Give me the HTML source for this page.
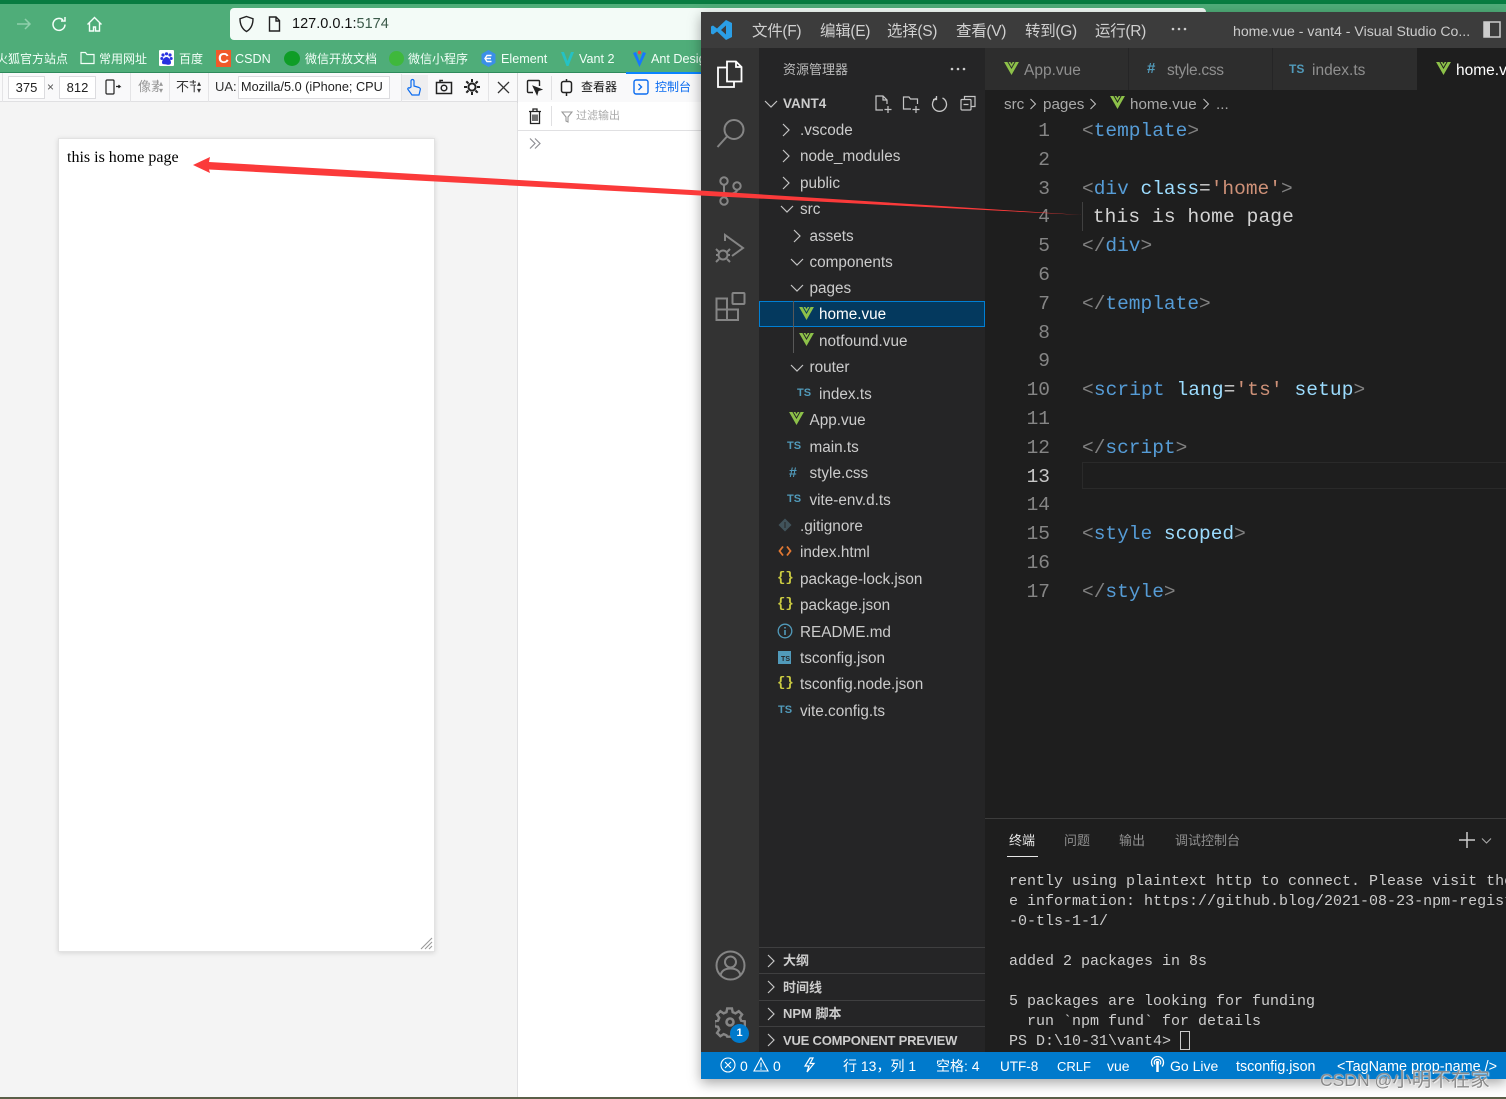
<!DOCTYPE html>
<html><head><meta charset="utf-8"><style>
html,body{margin:0;padding:0;background:#fff}
#p{position:relative;width:1506px;height:1099px;overflow:hidden;background:#fff;font-family:"Liberation Sans","Noto Sans CJK SC",sans-serif}
#p div,#p span.a,#p svg.a{position:absolute}
.t{white-space:nowrap}
.r{position:absolute;white-space:nowrap;color:#cccccc;font-size:15.300px;line-height:26px;height:26px;margin-top:1px}
.bm{position:absolute;top:50px;height:18px;line-height:18px;font-size:12px;color:#f2fff8;white-space:nowrap}
.bl{font-size:12.600px}
.m{position:absolute;top:20px;line-height:24px;font-size:15.500px;letter-spacing:-.3px;color:#d0d0d0;white-space:nowrap}
.ln{position:absolute;left:1000px;width:50px;text-align:right;font:19.5px/28px "Liberation Mono",monospace;color:#858585;margin-top:1px}
.c{position:absolute;left:1082px;font:19.5px/28px "Liberation Mono",monospace;color:#d4d4d4;white-space:pre;margin-top:1px}
.g{color:#808080}.b{color:#569cd6}.l{color:#9cdcfe}.s{color:#ce9178}
.tm{position:absolute;left:1009px;font:15px/20px "Liberation Mono",monospace;color:#cccccc;white-space:pre;margin-top:1px}
.sb{position:absolute;top:1057px;line-height:18px;font-size:14px;color:#fff;white-space:nowrap}
.sh{position:absolute;left:759px;width:226px;height:1px;background:#3f3f40}
.st{position:absolute;left:783px;font-size:13px;font-weight:bold;color:#cccccc;line-height:20px;white-space:nowrap;margin-top:1px}
.ts{position:absolute;font:bold 11px/14px "Liberation Sans",sans-serif;color:#519aba}
.j{position:absolute;font:bold 14px/16px "Liberation Mono",monospace;color:#cbcb41;letter-spacing:0}
</style></head><body><div id="p">
<svg width="0" height="0" style="position:absolute"><defs>
<symbol id="v" viewBox="0 0 16 14"><path d="M0 0h3.6L8 7.6 12.400 0H16L8 14z" fill="#8dc149"/><path d="M4.800 0h2L8 2.200 9.200 0h2L8 5.500z" fill="#8dc149"/></symbol>
<symbol id="cr" viewBox="0 0 12 14"><path d="M3 1l6 6-6 6" fill="none" stroke="#c5c5c5" stroke-width="1.200"/></symbol>
<symbol id="cd" viewBox="0 0 14 12"><path d="M1 3l6 6 6-6" fill="none" stroke="#c5c5c5" stroke-width="1.200"/></symbol>
</defs></svg>

<!-- browser chrome -->
<div style="left:0;top:0;width:1506px;height:4px;background:#087c41"></div>
<div style="left:0;top:4px;width:1506px;height:68px;background:#4fad79"></div>
<div style="left:230px;top:8px;width:976px;height:32px;background:#f3fbf7;border-radius:4px"></div>
<svg class="a" style="left:15px;top:15px" width="18" height="18" fill="none" stroke="#8fd0ac" stroke-width="1.500"><path d="M2 9h13M10 4l5 5-5 5"/></svg>
<svg class="a" style="left:51px;top:16px" width="17" height="17" fill="none" stroke="#f4fff9" stroke-width="1.500"><path d="M14 8.500a6 6 0 1 1-2-4.600M14 1v4h-4"/></svg>
<svg class="a" style="left:86px;top:16px" width="17" height="17" fill="none" stroke="#f4fff9" stroke-width="1.400"><path d="M1.500 8.500L8.500 1.500l7 7M3.500 7v8h4v-4h2v4h4V7"/></svg>
<svg class="a" style="left:238px;top:15px" width="17" height="18" fill="none" stroke="#222" stroke-width="1.400"><path d="M8.500 1.500l6.500 2.200c0 6-1.800 10-6.500 12.800C3.800 13.700 2 9.700 2 3.700z"/></svg>
<svg class="a" style="left:268px;top:16px" width="13" height="16" fill="none" stroke="#222" stroke-width="1.400"><path d="M1.500 1h6.500l3.500 3.500V15h-10zM8 1v4h3.500"/></svg>
<div class="t" style="left:292px;top:14px;font-size:14.500px;line-height:20px;color:#152"><span style="color:#111">127.0.0.1:</span><span style="color:#3c5a4a">5174</span></div>

<div class="bm" style="left:-4px">火狐官方站点</div>
<svg class="a" style="left:80px;top:51px" width="15" height="14" fill="none" stroke="#f2fff8" stroke-width="1.200"><path d="M1 3V12.500H14V3.500H7L5.500 1.500H1z"/></svg>
<div class="bm" style="left:99px">常用网址</div>
<div style="left:159px;top:50px;width:15px;height:16px;background:#fff;border-radius:1px"></div>
<svg class="a" style="left:159px;top:51px" width="15" height="15" fill="#2932e1"><circle cx="4" cy="4" r="1.600"/><circle cx="7.500" cy="2.800" r="1.600"/><circle cx="11" cy="4" r="1.600"/><circle cx="2.800" cy="7.500" r="1.500"/><circle cx="12.200" cy="7.500" r="1.500"/><path d="M7.500 6c2 0 4.500 3 4.500 5.500S9.500 14 7.500 13.500 3 14 3 11.500 5.500 6 7.500 6z"/></svg>
<div class="bm" style="left:179px">百度</div>
<div style="left:216px;top:50px;width:15px;height:17px;background:#f1592a;color:#fff;font:bold 15px/17px 'Liberation Sans';text-align:center">C</div>
<div class="bm bl" style="left:235px">CSDN</div>
<div style="left:284px;top:51px;width:16px;height:15px;border-radius:50%;background:#0f9d27"></div>
<div class="bm" style="left:305px">微信开放文档</div>
<div style="left:389px;top:51px;width:15px;height:15px;border-radius:50%;background:#3fb83c"></div>
<div class="bm" style="left:408px">微信小程序</div>
<svg class="a" style="left:481px;top:50px" width="15" height="17"><path d="M7.500 0L14.500 4v9L7.500 17 .5 13V4z" fill="#3b8fe8"/><path d="M10.500 5.500L6 5.500 4 8.500 6 11.500 10.500 11.500M5 8.500h5" fill="none" stroke="#fff" stroke-width="1.400"/></svg>
<div class="bm bl" style="left:501px">Element</div>
<svg class="a" style="left:560px;top:51px" width="15" height="16"><path d="M1 1l3 0 3.500 9L11 1h3L8.500 15H6.500z" fill="#25c2c4"/></svg>
<div class="bm bl" style="left:579px">Vant 2</div>
<svg class="a" style="left:632px;top:50px" width="15" height="17"><path d="M1 3l3-1 3.500 9L11 2l3 1-6.500 14z" fill="#1677ff"/><circle cx="7.500" cy="2.500" r="1.700" fill="#f5483b"/></svg>
<div class="bm bl" style="left:651px">Ant Desig</div>

<!-- responsive toolbar -->
<div style="left:0;top:72px;width:701px;height:1px;background:#2e8a5c"></div>
<div style="left:0;top:73px;width:701px;height:29px;background:#f9f9fa"></div>
<div style="left:0;top:101px;width:518px;height:1px;background:#e0e0e2"></div>
<div style="left:518px;top:102px;width:183px;height:995px;background:#fff"></div>
<div style="left:517px;top:73px;width:1px;height:1024px;background:#e0e0e2"></div>
<div style="left:626px;top:72px;width:75px;height:2px;background:#0a84ff"></div>
<div style="left:2px;top:73px;width:1px;height:29px;background:#e4e4e6"></div>
<div style="left:8px;top:76px;width:35px;height:21px;background:#fff;border:1px solid #dcdcdf;text-align:center;font-size:13px;line-height:21px;color:#222">375</div>
<div class="t" style="left:47px;top:78px;font-size:12px;line-height:18px;color:#555">×</div>
<div style="left:59px;top:76px;width:35px;height:21px;background:#fff;border:1px solid #dcdcdf;text-align:center;font-size:13px;line-height:21px;color:#222">812</div>
<svg class="a" style="left:105px;top:79px" width="17" height="16" fill="none" stroke="#222" stroke-width="1.200"><rect x="1" y="1" width="8" height="14" rx="1"/><path d="M11 7.500h4l-1.500-1.500M15 7.500L13.500 9"/></svg>
<div style="left:130px;top:73px;width:1px;height:29px;background:#e4e4e6"></div>
<div class="t" style="left:138px;top:79px;width:21px;overflow:hidden;font-size:13px;line-height:16px;color:#999">像素</div>
<div class="t" style="left:159px;top:80px;font-size:8px;line-height:7px;color:#999">▴<br>▾</div>
<div style="left:169px;top:73px;width:1px;height:29px;background:#e4e4e6"></div>
<div class="t" style="left:176px;top:79px;width:20px;overflow:hidden;font-size:13px;line-height:16px;color:#333">不节</div>
<div class="t" style="left:197px;top:80px;font-size:8px;line-height:7px;color:#333">▴<br>▾</div>
<div style="left:208px;top:73px;width:1px;height:29px;background:#e4e4e6"></div>
<div class="t" style="left:215px;top:79px;font-size:13px;line-height:16px;color:#333">UA:</div>
<div class="t" style="left:238px;top:76px;width:148px;height:21px;overflow:hidden;background:#fff;border:1px solid #dcdcdf;font-size:12.700px;line-height:21px;color:#222;padding-left:2px;box-sizing:content-box">Mozilla/5.0 (iPhone; CPU</div>
<div style="left:401px;top:74px;width:1px;height:28px;background:#e4e4e6"></div>
<div style="left:402px;top:75px;width:26px;height:25px;background:#eeeef0"></div>
<svg class="a" style="left:405px;top:78px" width="18" height="19" fill="none" stroke="#0b6cf0" stroke-width="1.200"><path d="M6 9V3a1.500 1.500 0 0 1 3 0v5l5 1.500c1 .4 1.500 1 1.300 2L14 17H7L3 11.500c-.7-1 .6-2.300 1.600-1.500z"/></svg>
<svg class="a" style="left:435px;top:79px" width="18" height="16" fill="none" stroke="#222" stroke-width="1.500"><path d="M1.500 3.500h15v11h-15zM5 3V1.500h3"/><circle cx="9" cy="9" r="2.800"/></svg>
<svg class="a" style="left:463px;top:78px" width="18" height="18" fill="none" stroke="#222"><circle cx="9" cy="9" r="3.600" stroke-width="2"/><path d="M9 1v3M9 14v3M1 9h3M14 9h3M3.300 3.300l2.200 2.200M12.500 12.500l2.200 2.200M3.300 14.700l2.200-2.200M12.500 5.500l2.200-2.200" stroke-width="2"/></svg>
<div style="left:488px;top:73px;width:1px;height:29px;background:#e4e4e6"></div>
<svg class="a" style="left:497px;top:81px" width="13" height="13" stroke="#333" stroke-width="1.300"><path d="M1 1l11 11M12 1L1 12"/></svg>
<div style="left:517px;top:73px;width:1px;height:30px;background:#d8d8da"></div>
<svg class="a" style="left:526px;top:79px" width="17" height="17" fill="none" stroke="#222" stroke-width="1.400"><path d="M7 13.500H2.500a1 1 0 0 1-1-1v-10a1 1 0 0 1 1-1h10a1 1 0 0 1 1 1V7"/><path d="M7.500 7.500l7.500 3-3 1-1 3.500z" fill="#222"/></svg>
<div style="left:551px;top:76px;width:1px;height:24px;background:#e0e0e2"></div>
<svg class="a" style="left:559px;top:79px" width="15" height="17" fill="none" stroke="#222" stroke-width="1.500"><rect x="2.500" y="2.500" width="10" height="11" rx="2"/><path d="M7.500 0v2.500M7.500 13.500V17"/></svg>
<div class="t" style="left:581px;top:79px;font-size:12px;line-height:17px;color:#111">查看器</div>
<svg class="a" style="left:633px;top:79px" width="16" height="16" fill="none" stroke="#0b6cf0" stroke-width="1.400"><rect x="1" y="1" width="14" height="14" rx="2"/><path d="M5.500 5l3 3-3 3"/></svg>
<div class="t" style="left:655px;top:79px;font-size:12px;line-height:17px;color:#0b6cf0">控制台</div>

<!-- devtools console -->
<div style="left:518px;top:130px;width:183px;height:1px;background:#e0e0e2"></div>
<svg class="a" style="left:528px;top:108px" width="14" height="17" fill="none" stroke="#222" stroke-width="1.300"><path d="M1 3.500h12M5 3V1h4v2M2.500 4v11.500h9V4M5 6.500v6.500M7 6.500v6.500M9 6.500v6.500"/></svg>
<div style="left:551px;top:106px;width:1px;height:20px;background:#e0e0e2"></div>
<svg class="a" style="left:561px;top:111px" width="12" height="12" fill="none" stroke="#999" stroke-width="1.100"><path d="M1 1h10L7 6v5L5 10V6z"/></svg>
<div class="t" style="left:576px;top:108px;font-size:11px;line-height:17px;color:#aaa">过滤输出</div>
<svg class="a" style="left:529px;top:137px" width="13" height="13" fill="none" stroke="#8f8f95" stroke-width="1.200"><path d="M1 1.500l5 5-5 5M6 1.500l5 5-5 5"/></svg>

<!-- viewport -->
<div style="left:0;top:102px;width:517px;height:995px;background:#f4f4f4"></div>
<div style="left:58px;top:138px;width:377px;height:814px;box-sizing:border-box;background:#fff;border:1px solid #e2e2e2;box-shadow:0 1px 5px rgba(0,0,0,.13)"></div>
<div class="t" style="left:67px;top:149px;font:16px/18px 'Liberation Serif',serif;color:#000">this is home page</div>
<svg class="a" style="left:420px;top:937px" width="13" height="13" stroke="#999" stroke-width="1.100"><path d="M1 12L12 1M5 12l7-7M9 12l3-3"/></svg>
<div style="left:0;top:1097px;width:1506px;height:2px;background:#5a5f48"></div>

<!-- VS Code window -->
<div style="left:701px;top:12px;width:805px;height:1067px;background:#1e1e1e;box-shadow:0 4px 12px rgba(0,0,0,.35)"></div>
<div style="left:701px;top:12px;width:805px;height:36px;background:#3c3c3c"></div>
<div style="left:701px;top:48px;width:58px;height:1004px;background:#333333"></div>
<div style="left:759px;top:48px;width:226px;height:1004px;background:#252526"></div>
<svg class="a" style="left:711px;top:20px" width="21" height="20"><path d="M15 0l6 3v14l-6 3L6 11.500 2 14.500 0 13.500V6.500l2-1 4 3zM15 5.500L10 10l5 4.500z" fill="#2b9fe6"/></svg>
<div class="m" style="left:752px">文件(F)</div>
<div class="m" style="left:820px">编辑(E)</div>
<div class="m" style="left:887px">选择(S)</div>
<div class="m" style="left:956px">查看(V)</div>
<div class="m" style="left:1025px">转到(G)</div>
<div class="m" style="left:1095px">运行(R)</div>
<svg class="a" style="left:1171px;top:27px" width="16" height="4" fill="#ccc"><circle cx="2" cy="2" r="1.300"/><circle cx="8" cy="2" r="1.300"/><circle cx="14" cy="2" r="1.300"/></svg>
<div class="t" style="left:1233px;top:21px;font-size:14.100px;line-height:20px;color:#cccccc">home.vue - vant4 - Visual Studio Co...</div>
<svg class="a" style="left:1483px;top:21px" width="18" height="18"><rect x="1" y="1" width="16" height="15" fill="none" stroke="#ccc" stroke-width="1.500"/><rect x="1" y="1" width="6" height="15" fill="#ccc"/></svg>

<!-- activity bar -->
<svg class="a" style="left:716px;top:60px" width="28" height="30" fill="none" stroke="#fff" stroke-width="1.800"><path d="M11 1.500h9l5.500 5.500v14.500H11zM20 1.500V7h5.500"/><path d="M11 7.500H2v19.500h16v-5.500"/></svg>
<svg class="a" style="left:716px;top:118px" width="30" height="31" fill="none" stroke="#858585" stroke-width="2"><circle cx="18" cy="11.500" r="9.500"/><path d="M11 18.500L1.500 29"/></svg>
<svg class="a" style="left:717px;top:176px" width="28" height="31" fill="none" stroke="#858585" stroke-width="2"><circle cx="7" cy="5" r="3.700"/><circle cx="7" cy="25" r="3.700"/><circle cx="20" cy="10" r="3.700"/><path d="M7 9v12M20 14c0 4-9 3-12 8"/></svg>
<svg class="a" style="left:715px;top:233px" width="30" height="32" fill="none" stroke="#858585" stroke-width="2"><path d="M10 8V2l18 13-11 8"/><circle cx="8" cy="22" r="4.500"/><path d="M1 16l3 3M15 16l-3 3M1 22h3M12 22h3M1 29l3-3M15 29l-3-3"/></svg>
<svg class="a" style="left:715px;top:291px" width="31" height="31" fill="none" stroke="#858585" stroke-width="2"><rect x="17.500" y="2" width="12" height="11" rx="1"/><path d="M1.500 7.500H12V18.500H23V29H1.500zM1.500 18.500H12V29"/></svg>
<svg class="a" style="left:715px;top:950px" width="31" height="31" fill="none" stroke="#858585" stroke-width="2"><circle cx="15.500" cy="15.500" r="14"/><circle cx="15.500" cy="12" r="5.500"/><path d="M5.500 25.500c1-5 5-7 10-7s9 2 10 7"/></svg>
<svg class="a" style="left:715px;top:1007px" width="31" height="31" fill="none" stroke="#858585" stroke-width="2.600"><path d="M13 1.500h5l.8 4 3 1.300 3.500-2.300 3.500 3.500-2.300 3.500 1.300 3 4 .8v0 5l-4 .8-1.300 3 2.300 3.500-3.500 3.500-3.500-2.300-3 1.300-.8 1.500h-5l-.8-1.500-3-1.300-3.500 2.300-3.500-3.500 2.300-3.500-1.300-3-4-.8v-5l4-.8 1.300-3-2.300-3.500 3.500-3.500 3.500 2.300 3-1.300z" transform="scale(.94)"/><circle cx="15" cy="15" r="3.500"/></svg>
<div style="left:730px;top:1024px;width:19px;height:19px;border-radius:50%;background:#007acc;color:#fff;font:bold 11px/19px 'Liberation Sans';text-align:center">1</div>

<!-- explorer -->
<div class="t" style="left:783px;top:61px;font-size:13px;line-height:18px;color:#bbbbbb">资源管理器</div>
<svg class="a" style="left:950px;top:67px" width="16" height="4" fill="#ccc"><circle cx="2" cy="2" r="1.300"/><circle cx="8" cy="2" r="1.300"/><circle cx="14" cy="2" r="1.300"/></svg>
<svg class="a" style="left:764px;top:98px" width="14" height="12"><use href="#cd"/></svg>
<div class="st" style="left:783px;top:93px;font-size:13.500px">VANT4</div>
<svg class="a" style="left:874px;top:95px" width="18" height="19" fill="none" stroke="#c5c5c5" stroke-width="1.200"><path d="M9 15H2V1h7l4 4v4M9 1v4h4M14 11v7M10.500 14.500h7"/></svg>
<svg class="a" style="left:902px;top:95px" width="20" height="19" fill="none" stroke="#c5c5c5" stroke-width="1.200"><path d="M9 14H1.500V2H7l1.500 2h7v5M14 11v7M10.500 14.500h7"/></svg>
<svg class="a" style="left:931px;top:95px" width="17" height="17" fill="none" stroke="#c5c5c5" stroke-width="1.300"><path d="M11.500 3a7 7 0 1 1-6 0M5.500 1v3.500H2"/></svg>
<svg class="a" style="left:960px;top:95px" width="16" height="16" fill="none" stroke="#c5c5c5" stroke-width="1.200"><rect x="1" y="4.500" width="10" height="10.500" rx="1"/><path d="M4.500 4.500V1.500H15v10h-4M3.500 9.500h5"/></svg>

<div style="left:759px;top:301px;width:226px;height:26px;box-sizing:border-box;background:#04395e;border:1px solid #007fd4"></div>
<div style="left:793px;top:301px;width:1px;height:52px;background:#585858"></div>

<svg class="a" style="left:780px;top:123px" width="12" height="14"><use href="#cr"/></svg><div class="r" style="left:800px;top:117px">.vscode</div>
<svg class="a" style="left:780px;top:149px" width="12" height="14"><use href="#cr"/></svg><div class="r" style="left:800px;top:143px">node_modules</div>
<svg class="a" style="left:780px;top:176px" width="12" height="14"><use href="#cr"/></svg><div class="r" style="left:800px;top:170px">public</div>
<svg class="a" style="left:780px;top:203px" width="14" height="12"><use href="#cd"/></svg><div class="r" style="left:800px;top:196px">src</div>
<svg class="a" style="left:791px;top:229px" width="12" height="14"><use href="#cr"/></svg><div class="r" style="left:809.500px;top:223px">assets</div>
<svg class="a" style="left:790px;top:256px" width="14" height="12"><use href="#cd"/></svg><div class="r" style="left:809.500px;top:249px">components</div>
<svg class="a" style="left:790px;top:282px" width="14" height="12"><use href="#cd"/></svg><div class="r" style="left:809.500px;top:275px">pages</div>
<svg class="a" style="left:799px;top:307px" width="15" height="13"><use href="#v"/></svg><div class="r" style="left:819px;top:301px;color:#fff">home.vue</div>
<svg class="a" style="left:799px;top:333px" width="15" height="13"><use href="#v"/></svg><div class="r" style="left:819px;top:328px">notfound.vue</div>
<svg class="a" style="left:790px;top:362px" width="14" height="12"><use href="#cd"/></svg><div class="r" style="left:809.500px;top:354px">router</div>
<div class="ts" style="left:797px;top:386px">TS</div><div class="r" style="left:819px;top:381px">index.ts</div>
<svg class="a" style="left:789px;top:412px" width="15" height="13"><use href="#v"/></svg><div class="r" style="left:809.500px;top:407px">App.vue</div>
<div class="ts" style="left:787px;top:439px">TS</div><div class="r" style="left:809.500px;top:434px">main.ts</div>
<div class="t" style="left:789px;top:464px;font:bold 14px/16px 'Liberation Sans';color:#519aba">#</div><div class="r" style="left:809.500px;top:460px">style.css</div>
<div class="ts" style="left:787px;top:492px">TS</div><div class="r" style="left:809.500px;top:487px">vite-env.d.ts</div>
<svg class="a" style="left:778px;top:518px" width="14" height="14"><path d="M7 .5L13.500 7 7 13.500.5 7z" fill="#41535b"/><path d="M7 4v6" stroke="#252526"/></svg><div class="r" style="left:800px;top:513px">.gitignore</div>
<svg class="a" style="left:778px;top:545px" width="14" height="12" fill="none" stroke="#e37933" stroke-width="1.800"><path d="M5 1.500L1.500 6 5 10.500M9 1.500L12.500 6 9 10.500"/></svg><div class="r" style="left:800px;top:539px">index.html</div>
<div class="j" style="left:777px;top:570px">{}</div><div class="r" style="left:800px;top:566px">package-lock.json</div>
<div class="j" style="left:777px;top:596px">{}</div><div class="r" style="left:800px;top:592px">package.json</div>
<svg class="a" style="left:777px;top:623px" width="16" height="16" fill="none" stroke="#519aba" stroke-width="1.300"><circle cx="8" cy="8" r="6.800"/><path d="M8 7v5M8 4v1.500" stroke-width="1.600"/></svg><div class="r" style="left:800px;top:619px">README.md</div>
<div style="left:778px;top:651px;width:13px;height:13px;background:#519aba;color:#252526;font:bold 7px/9px 'Liberation Sans';text-align:right;box-sizing:border-box;padding:4px 1px 0 0">TS</div><div class="r" style="left:800px;top:645px">tsconfig.json</div>
<div class="j" style="left:777px;top:675px">{}</div><div class="r" style="left:800px;top:671px">tsconfig.node.json</div>
<div class="ts" style="left:778px;top:703px">TS</div><div class="r" style="left:800px;top:698px">vite.config.ts</div>

<!-- collapsed sections -->
<div class="sh" style="top:947px"></div><div class="sh" style="top:973px"></div><div class="sh" style="top:1000px"></div><div class="sh" style="top:1026px"></div>
<svg class="a" style="left:765px;top:954px" width="12" height="14"><use href="#cr"/></svg><div class="st" style="top:950px">大纲</div>
<svg class="a" style="left:765px;top:980px" width="12" height="14"><use href="#cr"/></svg><div class="st" style="top:977px">时间线</div>
<svg class="a" style="left:765px;top:1007px" width="12" height="14"><use href="#cr"/></svg><div class="st" style="top:1003px">NPM 脚本</div>
<svg class="a" style="left:765px;top:1033px" width="12" height="14"><use href="#cr"/></svg><div class="st" style="top:1030px;letter-spacing:-.2px">VUE COMPONENT PREVIEW</div>

<!-- tabs -->
<div style="left:985px;top:48px;width:521px;height:42px;background:#252526"></div>
<div style="left:985px;top:48px;width:143px;height:42px;background:#2d2d2d"></div>
<div style="left:1129px;top:48px;width:143px;height:42px;background:#2d2d2d"></div>
<div style="left:1273px;top:48px;width:144px;height:42px;background:#2d2d2d"></div>
<div style="left:1417px;top:48px;width:89px;height:42px;background:#1e1e1e"></div>
<svg class="a" style="left:1004px;top:62px" width="15" height="13"><use href="#v"/></svg><div class="t" style="left:1024px;top:61px;font-size:15.500px;line-height:20px;color:#8f8f8f">App.vue</div>
<div class="t" style="left:1147px;top:60px;font:bold 15px/18px 'Liberation Sans';color:#519aba">#</div><div class="t" style="left:1167px;top:61px;font-size:15.500px;letter-spacing:-.3px;line-height:20px;color:#8f8f8f">style.css</div>
<div class="ts" style="left:1289px;top:62px;font-size:12px">TS</div><div class="t" style="left:1312px;top:61px;font-size:15.500px;line-height:20px;color:#8f8f8f">index.ts</div>
<svg class="a" style="left:1436px;top:62px" width="15" height="13"><use href="#v"/></svg><div class="t" style="left:1456px;top:61px;font-size:15.500px;line-height:20px;color:#fff">home.v</div>

<!-- breadcrumb -->
<div class="t" style="left:1004px;top:95px;font-size:15.200px;line-height:20px;color:#a9a9a9">src</div>
<svg class="a" style="left:1028px;top:97px" width="10" height="14"><use href="#cr"/></svg>
<div class="t" style="left:1043px;top:95px;font-size:15.200px;line-height:20px;color:#a9a9a9">pages</div>
<svg class="a" style="left:1088px;top:97px" width="10" height="14"><use href="#cr"/></svg>
<svg class="a" style="left:1110px;top:96px" width="15" height="13"><use href="#v"/></svg>
<div class="t" style="left:1130px;top:95px;font-size:15.200px;line-height:20px;color:#a9a9a9">home.vue</div>
<svg class="a" style="left:1201px;top:97px" width="10" height="14"><use href="#cr"/></svg>
<div class="t" style="left:1216px;top:95px;font-size:15.200px;line-height:20px;color:#a9a9a9">...</div>

<!-- code -->
<div style="left:1082px;top:462px;width:424px;height:27px;box-sizing:border-box;border:1px solid #2a2a2a;border-right:0"></div>
<div style="left:1082px;top:202px;width:1px;height:29px;background:#404040"></div>
<div class="ln" style="top:116px">1</div><div class="ln" style="top:145px">2</div><div class="ln" style="top:174px">3</div><div class="ln" style="top:202px">4</div><div class="ln" style="top:231px">5</div><div class="ln" style="top:260px">6</div><div class="ln" style="top:289px">7</div><div class="ln" style="top:318px">8</div><div class="ln" style="top:346px">9</div><div class="ln" style="top:375px">10</div><div class="ln" style="top:404px">11</div><div class="ln" style="top:433px">12</div><div class="ln" style="top:462px;color:#c6c6c6">13</div><div class="ln" style="top:490px">14</div><div class="ln" style="top:519px">15</div><div class="ln" style="top:548px">16</div><div class="ln" style="top:577px">17</div>
<div class="c" style="top:116px"><span class="g">&lt;</span><span class="b">template</span><span class="g">&gt;</span></div>
<div class="c" style="top:174px"><span class="g">&lt;</span><span class="b">div</span> <span class="l">class</span>=<span class="s">'home'</span><span class="g">&gt;</span></div>
<div class="c" style="top:202px;left:1081px;letter-spacing:.13px"> this is home page</div>
<div class="c" style="top:231px"><span class="g">&lt;/</span><span class="b">div</span><span class="g">&gt;</span></div>
<div class="c" style="top:289px"><span class="g">&lt;/</span><span class="b">template</span><span class="g">&gt;</span></div>
<div class="c" style="top:375px;letter-spacing:.1px"><span class="g">&lt;</span><span class="b">script</span> <span class="l">lang</span>=<span class="s">'ts'</span> <span class="l">setup</span><span class="g">&gt;</span></div>
<div class="c" style="top:433px"><span class="g">&lt;/</span><span class="b">script</span><span class="g">&gt;</span></div>
<div class="c" style="top:519px"><span class="g">&lt;</span><span class="b">style</span> <span class="l">scoped</span><span class="g">&gt;</span></div>
<div class="c" style="top:577px"><span class="g">&lt;/</span><span class="b">style</span><span class="g">&gt;</span></div>

<!-- terminal -->
<div style="left:985px;top:818px;width:521px;height:1px;background:#3c3c3c"></div>
<div class="t" style="left:1009px;top:832px;font-size:13px;line-height:18px;color:#e7e7e7">终端</div>
<div style="left:1007px;top:856px;width:31px;height:1px;background:#e7e7e7"></div>
<div class="t" style="left:1064px;top:832px;font-size:13px;line-height:18px;color:#8f8f8f">问题</div>
<div class="t" style="left:1119px;top:832px;font-size:13px;line-height:18px;color:#8f8f8f">输出</div>
<div class="t" style="left:1175px;top:832px;font-size:13px;line-height:18px;color:#8f8f8f">调试控制台</div>
<svg class="a" style="left:1459px;top:832px" width="16" height="16" stroke="#ccc" stroke-width="1.500"><path d="M8 0v16M0 8h16"/></svg>
<svg class="a" style="left:1481px;top:837px" width="11" height="8" fill="none" stroke="#aaa" stroke-width="1.100"><path d="M1 1.500l4.500 4.500L10 1.500"/></svg>
<div class="tm" style="top:871px">rently using plaintext http to connect. Please visit the</div>
<div class="tm" style="top:891px">e information: https://github.blog/2021-08-23-npm-regist</div>
<div class="tm" style="top:911px">-0-tls-1-1/</div>
<div class="tm" style="top:951px">added 2 packages in 8s</div>
<div class="tm" style="top:991px">5 packages are looking for funding</div>
<div class="tm" style="top:1011px">  run `npm fund` for details</div>
<div class="tm" style="top:1031px">PS D:\10-31\vant4&gt; </div>
<div style="left:1180px;top:1031px;width:8px;height:17px;border:1px solid #ccc"></div>

<!-- status bar -->
<div style="left:701px;top:1052px;width:805px;height:27px;background:#007acc"></div>
<svg class="a" style="left:720px;top:1057px" width="16" height="16" fill="none" stroke="#fff" stroke-width="1.100"><circle cx="8" cy="8" r="7"/><path d="M5 5l6 6M11 5l-6 6"/></svg>
<div class="sb" style="left:740px">0</div>
<svg class="a" style="left:753px;top:1057px" width="16" height="15" fill="none" stroke="#fff" stroke-width="1.100"><path d="M8 1l7 13H1zM8 5.500v5M8 11.500v1.200"/></svg>
<div class="sb" style="left:773px">0</div>
<svg class="a" style="left:802px;top:1057px" width="14" height="16" fill="none" stroke="#fff" stroke-width="1.200"><path d="M8 1L3 9h4l-2 6 7-8.500H8l3-5.500z"/></svg>
<div class="sb" style="left:843px">行 13，列 1</div>
<div class="sb" style="left:936px">空格: 4</div>
<div class="sb" style="left:1000px;top:1058px;font-size:13.500px">UTF-8</div>
<div class="sb" style="left:1057px;top:1058px;font-size:13px">CRLF</div>
<div class="sb" style="left:1107px">vue</div>
<svg class="a" style="left:1150px;top:1056px" width="15" height="17" fill="none" stroke="#fff" stroke-width="1.300"><path d="M3 10.500a6 6 0 1 1 9 0M5 8.500a3.200 3.200 0 1 1 5 0"/><circle cx="7.500" cy="6.500" r="1" fill="#fff"/><path d="M7.500 8v8" stroke-width="2.500"/></svg>
<div class="sb" style="left:1170px">Go Live</div>
<div class="sb" style="left:1236px;top:1058px;font-size:14.300px">tsconfig.json</div>
<div class="sb" style="left:1337px;top:1058px;font-size:14.400px">&lt;TagName prop-name /&gt;</div>

<!-- arrow -->
<svg class="a" style="left:0;top:0" width="1506" height="1099"><polygon points="193,165 210,157 209,162 700,190.500 1082,215 700,195.500 209,169.500 210,173" fill="#fb3a3a"/></svg>

<!-- watermark -->
<div class="t" style="left:1320px;top:1067px;font-size:19.500px;line-height:26px;color:#8a8a8a;text-shadow:0 0 1px #fff,1px 1px 1px rgba(255,255,255,.7)"><span style="font-size:17.500px">CSDN @</span>小明不在家</div>
</div></body></html>
